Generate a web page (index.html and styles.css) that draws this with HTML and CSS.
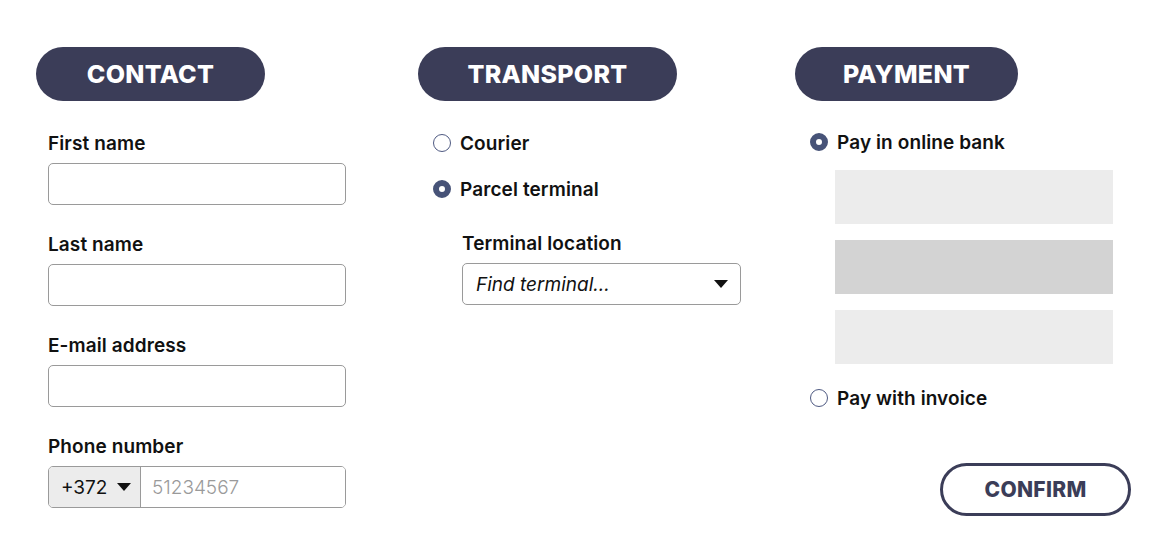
FILE: index.html
```html
<!DOCTYPE html>
<html>
<head>
  <meta charset="UTF-8">
  <title>Checkout</title>
  <link rel="stylesheet" href="styles.css">
</head>
<body>
  <div class="checkout">
    <!-- Contact details -->
    <section class="col col-contact">
      <h2 class="pill">CONTACT</h2>
      <div class="field">
        <label class="label">First name</label>
        <input class="text-input" type="text">
      </div>
      <div class="field">
        <label class="label">Last name</label>
        <input class="text-input" type="text">
      </div>
      <div class="field">
        <label class="label">E-mail address</label>
        <input class="text-input" type="text">
      </div>
      <div class="field">
        <label class="label">Phone number</label>
        <div class="phone">
          <div class="prefix">+372 <span class="caret"></span></div>
          <input class="phone-input" type="text" placeholder="51234567">
        </div>
      </div>
    </section>

    <!-- Transport -->
    <section class="col col-transport">
      <h2 class="pill">TRANSPORT</h2>
      <div class="radio-list">
        <div class="radio"><span class="dot"></span>Courier</div>
        <div class="radio"><span class="dot checked"></span>Parcel terminal</div>
      </div>
      <div class="terminal">
        <label class="label">Terminal location</label>
        <div class="select">
          <span>Find terminal...</span>
          <span class="caret"></span>
        </div>
      </div>
    </section>

    <!-- Payment -->
    <section class="col col-payment">
      <h2 class="pill">PAYMENT</h2>
      <div class="radio"><span class="dot checked"></span>Pay in online bank</div>
      <div class="banks">
        <div class="bank"></div>
        <div class="bank dark"></div>
        <div class="bank"></div>
      </div>
      <div class="radio"><span class="dot"></span>Pay with invoice</div>
      <button class="confirm" type="button">CONFIRM</button>
    </section>
  </div>
</body>
</html>
```

FILE: styles.css
```css
body {
  margin: 0;
  background: #fff;
  font-family: Inter, "Noto Sans", sans-serif;
  color: #111;
}
.checkout {
  display: flex;
  padding: 47px 0 0 36px;
}
.col {
  display: flex;
  flex-direction: column;
}
.col-contact {
  width: 382px;
}
.col-transport {
  width: 377px;
}
.col-payment {
  width: 340px;
}
.pill {
  margin: 0;
  height: 54px;
  border-radius: 27px;
  background: #3b3d58;
  color: #fff;
  font-size: 25px;
  font-weight: 800;
  letter-spacing: 0.3px;
  display: flex;
  align-items: center;
  justify-content: center;
}
.col-contact .pill {
  width: 229px;
}
.col-transport .pill {
  width: 259px;
}
.col-payment .pill {
  width: 223px;
}
.label {
  display: block;
  font-size: 19px;
  line-height: 22px;
  font-weight: 600;
  letter-spacing: 0.1px;
}
.field {
  margin-left: 12px;
  margin-top: 29px;
}
.col-contact .pill + .field {
  margin-top: 32px;
}
.text-input,
.phone {
  display: block;
  box-sizing: border-box;
  width: 298px;
  height: 42px;
  margin-top: 8px;
  border: 1.5px solid #9a9a9a;
  border-radius: 5px;
  background: #fff;
}
.phone {
  display: flex;
  overflow: hidden;
}
.prefix {
  flex: 0 0 92px;
  background: #ececec;
  border-right: 1.5px solid #9a9a9a;
  display: flex;
  align-items: center;
  padding-left: 12px;
  box-sizing: border-box;
  font-size: 19px;
}
.prefix .caret {
  margin-left: 10px;
}
.phone-input {
  flex: 1;
  min-width: 0;
  border: 0;
  outline: 0;
  padding: 0 11px;
  font-family: inherit;
  font-size: 19px;
  font-weight: 300;
}
.phone-input::placeholder {
  color: #9a9a9a;
}
.caret {
  width: 0;
  height: 0;
  border-left: 7px solid transparent;
  border-right: 7px solid transparent;
  border-top: 8px solid #111;
}
.radio {
  display: flex;
  align-items: center;
  height: 22px;
  font-size: 19px;
  font-weight: 600;
  letter-spacing: 0.1px;
  margin-left: 15px;
}
.dot {
  box-sizing: border-box;
  width: 18px;
  height: 18px;
  border-radius: 50%;
  border: 1.5px solid #4f5a82;
  margin-right: 9px;
  flex-shrink: 0;
}
.dot.checked {
  border: 6px solid #475378;
  background: #fff;
}
.radio-list {
  margin-top: 31px;
  display: flex;
  flex-direction: column;
  gap: 24px;
}
.terminal {
  margin: 33px 0 0 44px;
}
.select {
  box-sizing: border-box;
  width: 279px;
  height: 42px;
  margin-top: 8px;
  border: 1.5px solid #9a9a9a;
  border-radius: 5px;
  display: flex;
  align-items: center;
  justify-content: space-between;
  padding: 0 12px 0 13px;
  font-size: 19px;
  font-style: italic;
}
.col-payment > .radio:first-of-type {
  margin-top: 30px;
}
.banks {
  margin: 17px 0 0 40px;
  display: flex;
  flex-direction: column;
  gap: 16px;
}
.bank {
  width: 278px;
  height: 54px;
  background: #ececec;
}
.bank.dark {
  background: #d3d3d3;
}
.banks + .radio {
  margin-top: 23px;
}
.confirm {
  align-self: flex-start;
  margin: 54px 0 0 145px;
  width: 191px;
  height: 53px;
  border: 3px solid #3b3d58;
  border-radius: 27px;
  background: #fff;
  color: #3b3d58;
  font-family: inherit;
  font-size: 21px;
  font-weight: 800;
  letter-spacing: 0.3px;
}
```
